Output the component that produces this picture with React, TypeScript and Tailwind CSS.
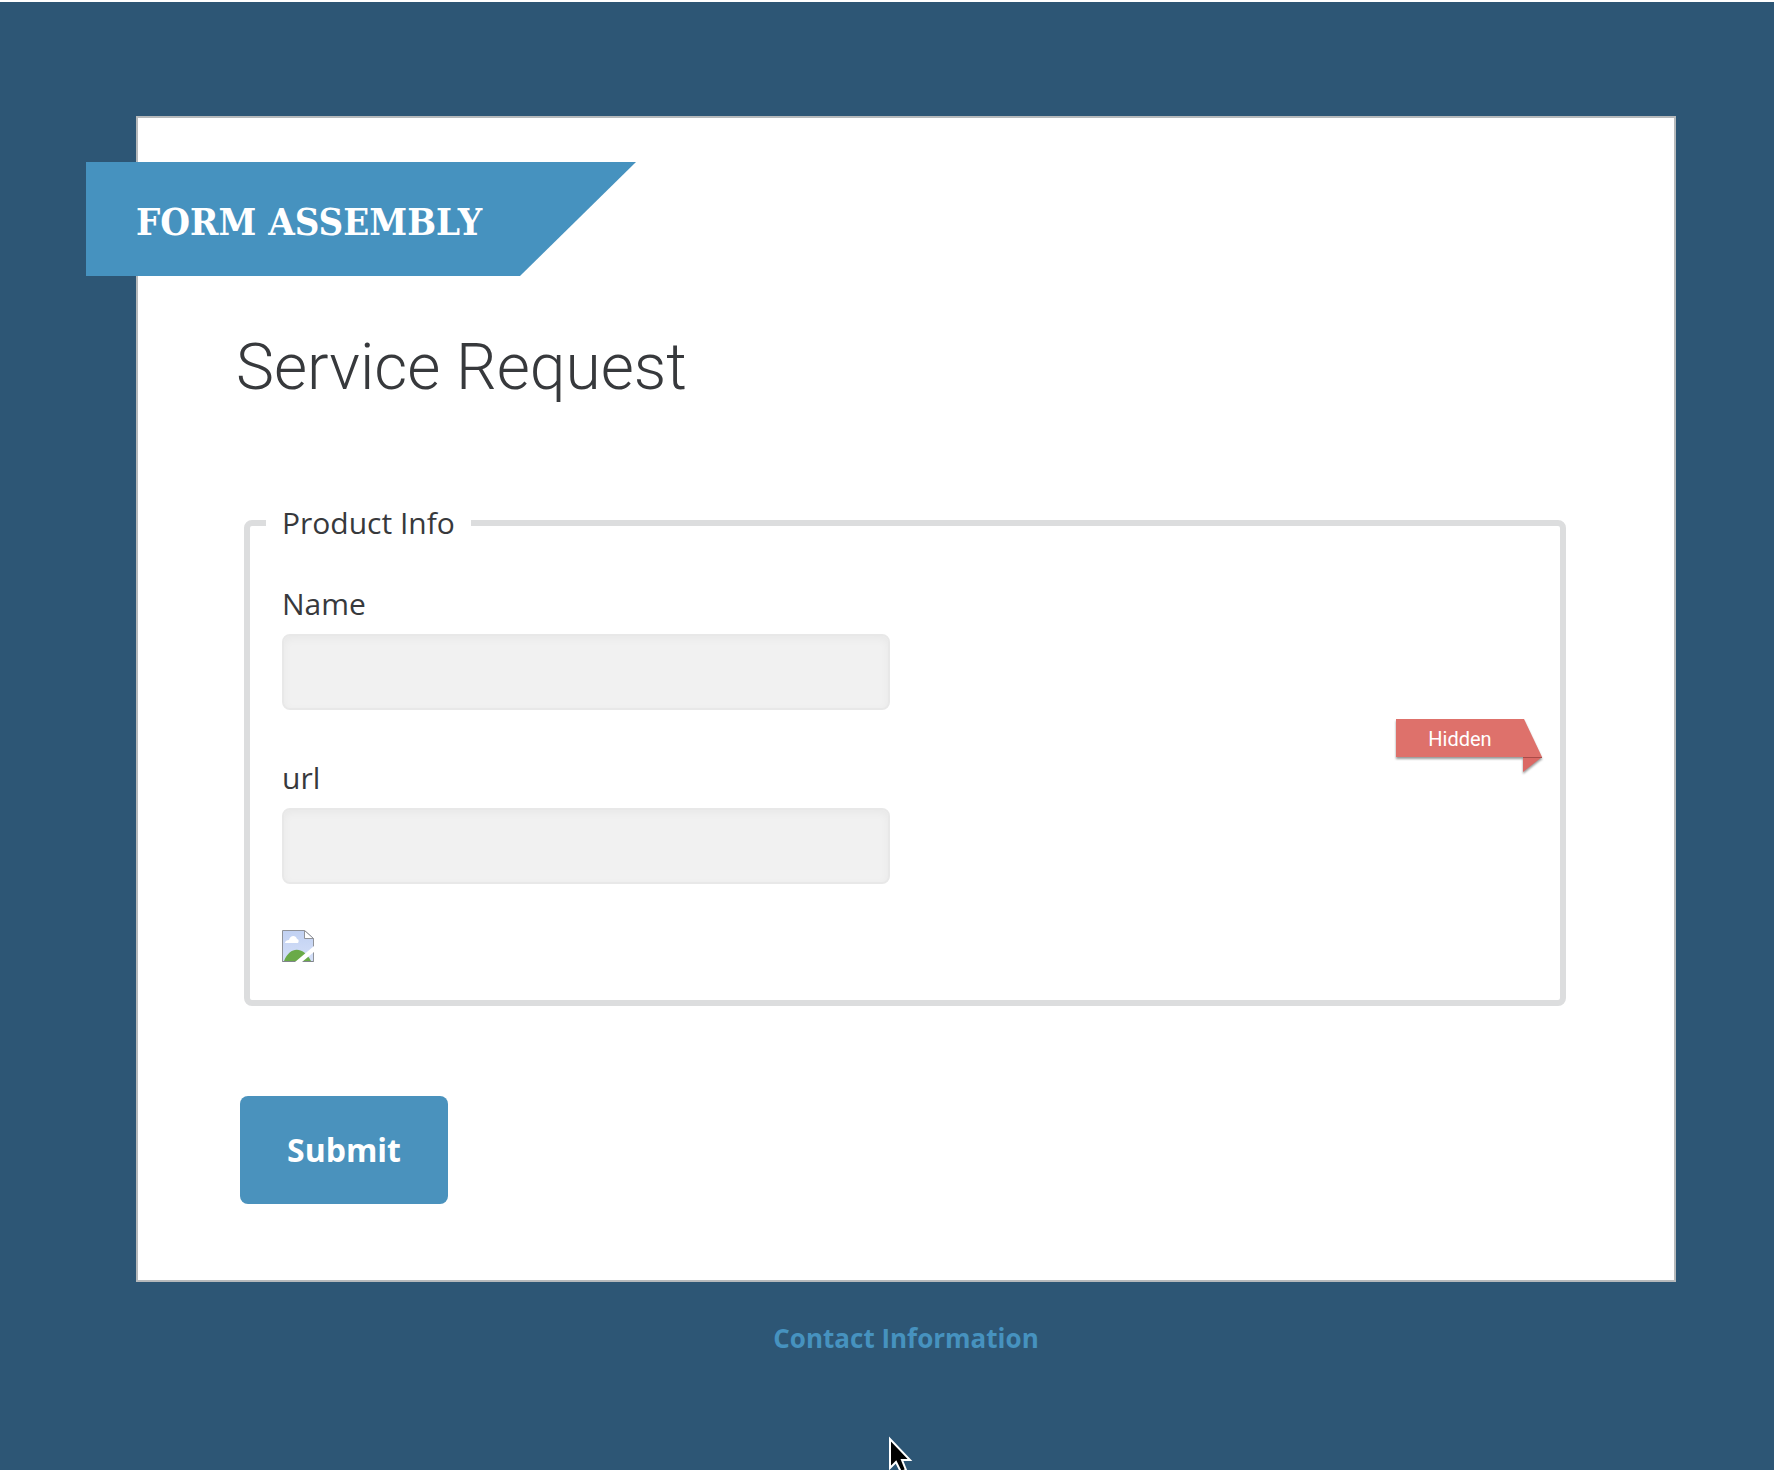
interface TextFieldProps {
  id: string;
  label: string;
}

export default function App() {
  return (
    <div className="relative min-h-screen overflow-hidden border-t-2 border-white bg-[#2d5675] pt-[114px] pr-[98px] pl-[136px] font-['Open_Sans',sans-serif] text-[#37393c]">
      <main className="border-2 border-[#b6b9bb] bg-white pt-11 pr-[104px] pb-[76px] pl-[102px]">
        <Banner />

        <h1 className="mt-14 -ml-1 font-['Roboto_Slab',Roboto,sans-serif] text-[64px] leading-[72px] font-light">
          Service Request
        </h1>

        <form className="mt-[99px]" onSubmit={(e) => e.preventDefault()}>
          <fieldset className="relative mx-1 rounded-lg border-6 border-[#dcddde] px-8 pb-[38px]">
            <legend className="-ml-4 px-4 text-[30px] leading-10">Product Info</legend>

            <div className="flex flex-col gap-12 pt-[41px] pb-[46px]">
              <TextField id="name" label="Name" />
              <TextField id="url" label="url" />
            </div>
            <BrokenImage />

            <HiddenBadge />
          </fieldset>

          <button
            type="submit"
            className="mt-[90px] cursor-pointer rounded-lg bg-[#4a92bd] px-[47px] py-8 text-[32px] leading-11 font-bold text-white"
          >
            Submit
          </button>
        </form>
      </main>

      <footer className="mt-[38px] text-center text-[26px] leading-9 font-bold">
        <a href="#contact" className="text-[#4692bf]">
          Contact Information
        </a>
      </footer>

      <Pointer />
    </div>
  );
}

function Banner() {
  return (
    <div className="-ml-[154px] flex h-[114px] w-[550px] items-center bg-[#4692bf] pt-1.5 pl-[50px] [clip-path:polygon(0_0,100%_0,434px_100%,0_100%)]">
      <span className="font-['DejaVu_Serif_Condensed','DejaVu_Serif',serif] text-[38px] leading-none font-bold whitespace-nowrap text-white">
        FORM ASSEMBLY
      </span>
    </div>
  );
}

function TextField({ id, label }: TextFieldProps) {
  return (
    <div className="flex flex-col gap-2.5">
      <label htmlFor={id} className="text-[30px] leading-10">
        {label}
      </label>
      <input
        id={id}
        type="text"
        className="h-[76px] w-full max-w-[608px] rounded-lg border-2 border-[#e8e8e8] bg-[#f1f1f1] px-4 text-[30px] shadow-[inset_0_3px_8px_rgba(0,0,0,0.04)] outline-none"
      />
    </div>
  );
}

function HiddenBadge() {
  return (
    <div className="absolute top-44 right-[18px] h-[54px] w-[146px]">
      <svg className="absolute inset-0 overflow-visible drop-shadow-[0_2px_1px_rgba(0,0,0,0.4)]" width="146" height="54" viewBox="0 0 146 54">
        <path d="M127 38h19l-19 15z" fill="#db6864" />
        <path d="M0 0h128l18 38H0z" fill="#de716b" />
        <path d="M127 38.5h19" stroke="#a94b48" />
      </svg>
      <span className="relative block w-32 text-center font-['Roboto',sans-serif] text-xl leading-10 text-white">
        Hidden
      </span>
    </div>
  );
}

function BrokenImage() {
  return (
    <svg className="block" width="32" height="32" viewBox="0 0 32 32" role="img" aria-label="Broken image">
      <defs>
        <linearGradient id="sky" x1="0" y1="0" x2="0" y2="1">
          <stop offset="0" stopColor="#c1d1f2" />
          <stop offset="1" stopColor="#d5e0f8" />
        </linearGradient>
      </defs>
      <path d="M.5.5h22l9 8v23H.5z" fill="url(#sky)" stroke="#909399" />
      <path d="M3 13c0-2 2-3 4-3 1-5 7-5 8-1 2 0 2 3 1 4z" fill="#fff" />
      <path d="M2 31c6-15 19-15 27 0z" fill="#6aaa48" />
      <path d="M.5 31.5h31" stroke="#80858a" />
      <path d="M22.5.5v8h9z" fill="#fff" stroke="#909399" />
      <path d="M13 32 32 16v6L20 32z" fill="#fff" />
    </svg>
  );
}

function Pointer() {
  return (
    <svg className="pointer-events-none absolute top-[1433px] left-[888px]" width="26" height="38" viewBox="0 0 26 38" aria-hidden="true">
      <path
        d="M2 4v29l6-6 5 10 5-2-4-10h8z"
        fill="#000"
        stroke="#fff"
        strokeWidth="2"
      />
    </svg>
  );
}
